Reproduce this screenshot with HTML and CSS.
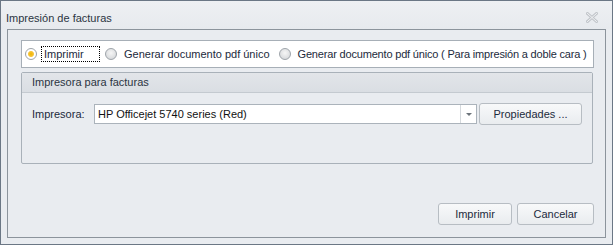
FILE: index.html
```html
<!DOCTYPE html>
<html lang="es">

<head>
    <meta charset="UTF-8">
    <meta name="viewport" content="width=device-width, initial-scale=1.0">
    <title>Impresión de facturas</title>
    <link rel="stylesheet" href="styles.css">
</head>

<body>
    <div class="window">
        <div class="title-bar">
            <span class="title">Impresión de facturas</span>
            <svg class="close-icon" width="12" height="11" viewBox="0 0 12 11">
                <path d="M1.5 1.5 L10.5 9.5 M10.5 1.5 L1.5 9.5" stroke="#c2c6cb" stroke-width="3" stroke-linecap="square" />
                <path d="M1.5 1.5 L10.5 9.5 M10.5 1.5 L1.5 9.5" stroke="#f2f3f5" stroke-width="1" stroke-linecap="square" />
            </svg>
        </div>
        <div class="frame">
            <div class="radio-box">
                <label class="radio-item first">
                    <span class="radio checked"></span>
                    <span class="radio-text focused">Imprimir</span>
                </label>
                <label class="radio-item second">
                    <span class="radio"></span>
                    <span class="radio-text">Generar documento pdf único</span>
                </label>
                <label class="radio-item third">
                    <span class="radio"></span>
                    <span class="radio-text">Generar documento pdf único ( Para impresión a doble cara )</span>
                </label>
            </div>

            <div class="group-panel">
                <div class="group-header">Impresora para facturas</div>
                <div class="group-body">
                    <span class="field-label">Impresora:</span>
                    <div class="combo">
                        <span class="combo-text">HP Officejet 5740 series (Red)</span>
                        <span class="combo-button"><span class="arrow"></span></span>
                    </div>
                    <button class="btn btn-props">Propiedades ...</button>
                </div>
            </div>

            <div class="actions">
                <button class="btn btn-print">Imprimir</button>
                <button class="btn btn-cancel">Cancelar</button>
            </div>
        </div>
    </div>
</body>

</html>
```

FILE: styles.css
```css
body {
    margin: 0;
    font-family: "Liberation Sans", Arial, sans-serif;
    font-size: 11px;
    color: #1c2a3c;
}

.window {
    width: 613px;
    height: 245px;
    box-sizing: border-box;
    border: 1px solid #6b7785;
    background-color: #e9ecf0;
    display: flex;
    flex-direction: column;
    padding: 0 6px 6px 6px;
}

.title-bar {
    height: 28px;
    display: flex;
    align-items: center;
    justify-content: space-between;
    padding-top: 6px;
    box-sizing: border-box;
    margin: 0 -6px;
    padding-left: 5px;
    padding-right: 14px;
    background: linear-gradient(#eef0f3, #e7eaee);
}

.title {
    color: #2b3542;
}

.close-icon {
    display: block;
    margin-top: -2px;
}

.frame {
    flex: 1;
    border: 1px solid #8c949c;
    display: flex;
    flex-direction: column;
    padding: 10px 11px 12px 13px;
}

.radio-box {
    height: 26px;
    background-color: #fff;
    border: 1px solid #a7afb7;
    display: flex;
    align-items: center;
    padding-left: 3px;
    white-space: nowrap;
}

.radio-item {
    display: flex;
    align-items: center;
    gap: 4px;
}

.radio-item.first {
    margin-right: 5px;
}

.radio-item.second {
    margin-right: 6px;
}

.radio-item.third .radio-text {
    letter-spacing: -0.18px;
}

.radio {
    width: 10px;
    height: 10px;
    border-radius: 50%;
    border: 1px solid #9ea4aa;
    background: radial-gradient(circle at 50% 40%, #f6f6f6, #cfd2d5);
}

.radio.checked {
    background: radial-gradient(circle, #f0b400 0, #f7c53a 2.5px, #fff 3.5px);
}

.radio-text {
    padding: 1px 2px;
    border: 1px solid transparent;
}

.radio-text.focused {
    border: 1px dotted #000;
    min-width: 53px;
}

.group-panel {
    margin-top: 4px;
    margin-right: 1px;
    border: 1px solid #a9b1b9;
    border-radius: 2px;
    height: 90px;
    display: flex;
    flex-direction: column;
}

.group-header {
    height: 19px;
    line-height: 19px;
    padding-left: 10px;
    background: linear-gradient(#e2e5e9, #dadee3);
    border-bottom: 1px solid #c4cad0;
    color: #2b3542;
}

.group-body {
    display: flex;
    align-items: center;
    padding: 10px 10px 0 10px;
}

.field-label {
    width: 62px;
}

.combo {
    flex: 1;
    height: 18px;
    border: 1px solid #abb3bb;
    background-color: #fff;
    display: flex;
    align-items: center;
}

.combo-text {
    flex: 1;
    padding-left: 3px;
    color: #111;
}

.combo-button {
    width: 15px;
    height: 100%;
    border-left: 1px solid #d5d9dd;
    display: flex;
    align-items: center;
    justify-content: center;
}

.arrow {
    width: 0;
    height: 0;
    border-left: 3px solid transparent;
    border-right: 3px solid transparent;
    border-top: 3px solid #6d747b;
}

.btn {
    font-family: "Liberation Sans", Arial, sans-serif;
    font-size: 11px;
    color: #1c2a3c;
    height: 22px;
    border: 1px solid #b7bdc3;
    border-radius: 3px;
    background: linear-gradient(#f8f9fa, #e9ecef);
    padding: 0;
}

.btn-props {
    width: 103px;
    margin-left: 2px;
}

.actions {
    margin-top: auto;
    display: flex;
    justify-content: flex-end;
    gap: 5px;
}

.btn-print {
    width: 74px;
}

.btn-cancel {
    width: 77px;
}
```
